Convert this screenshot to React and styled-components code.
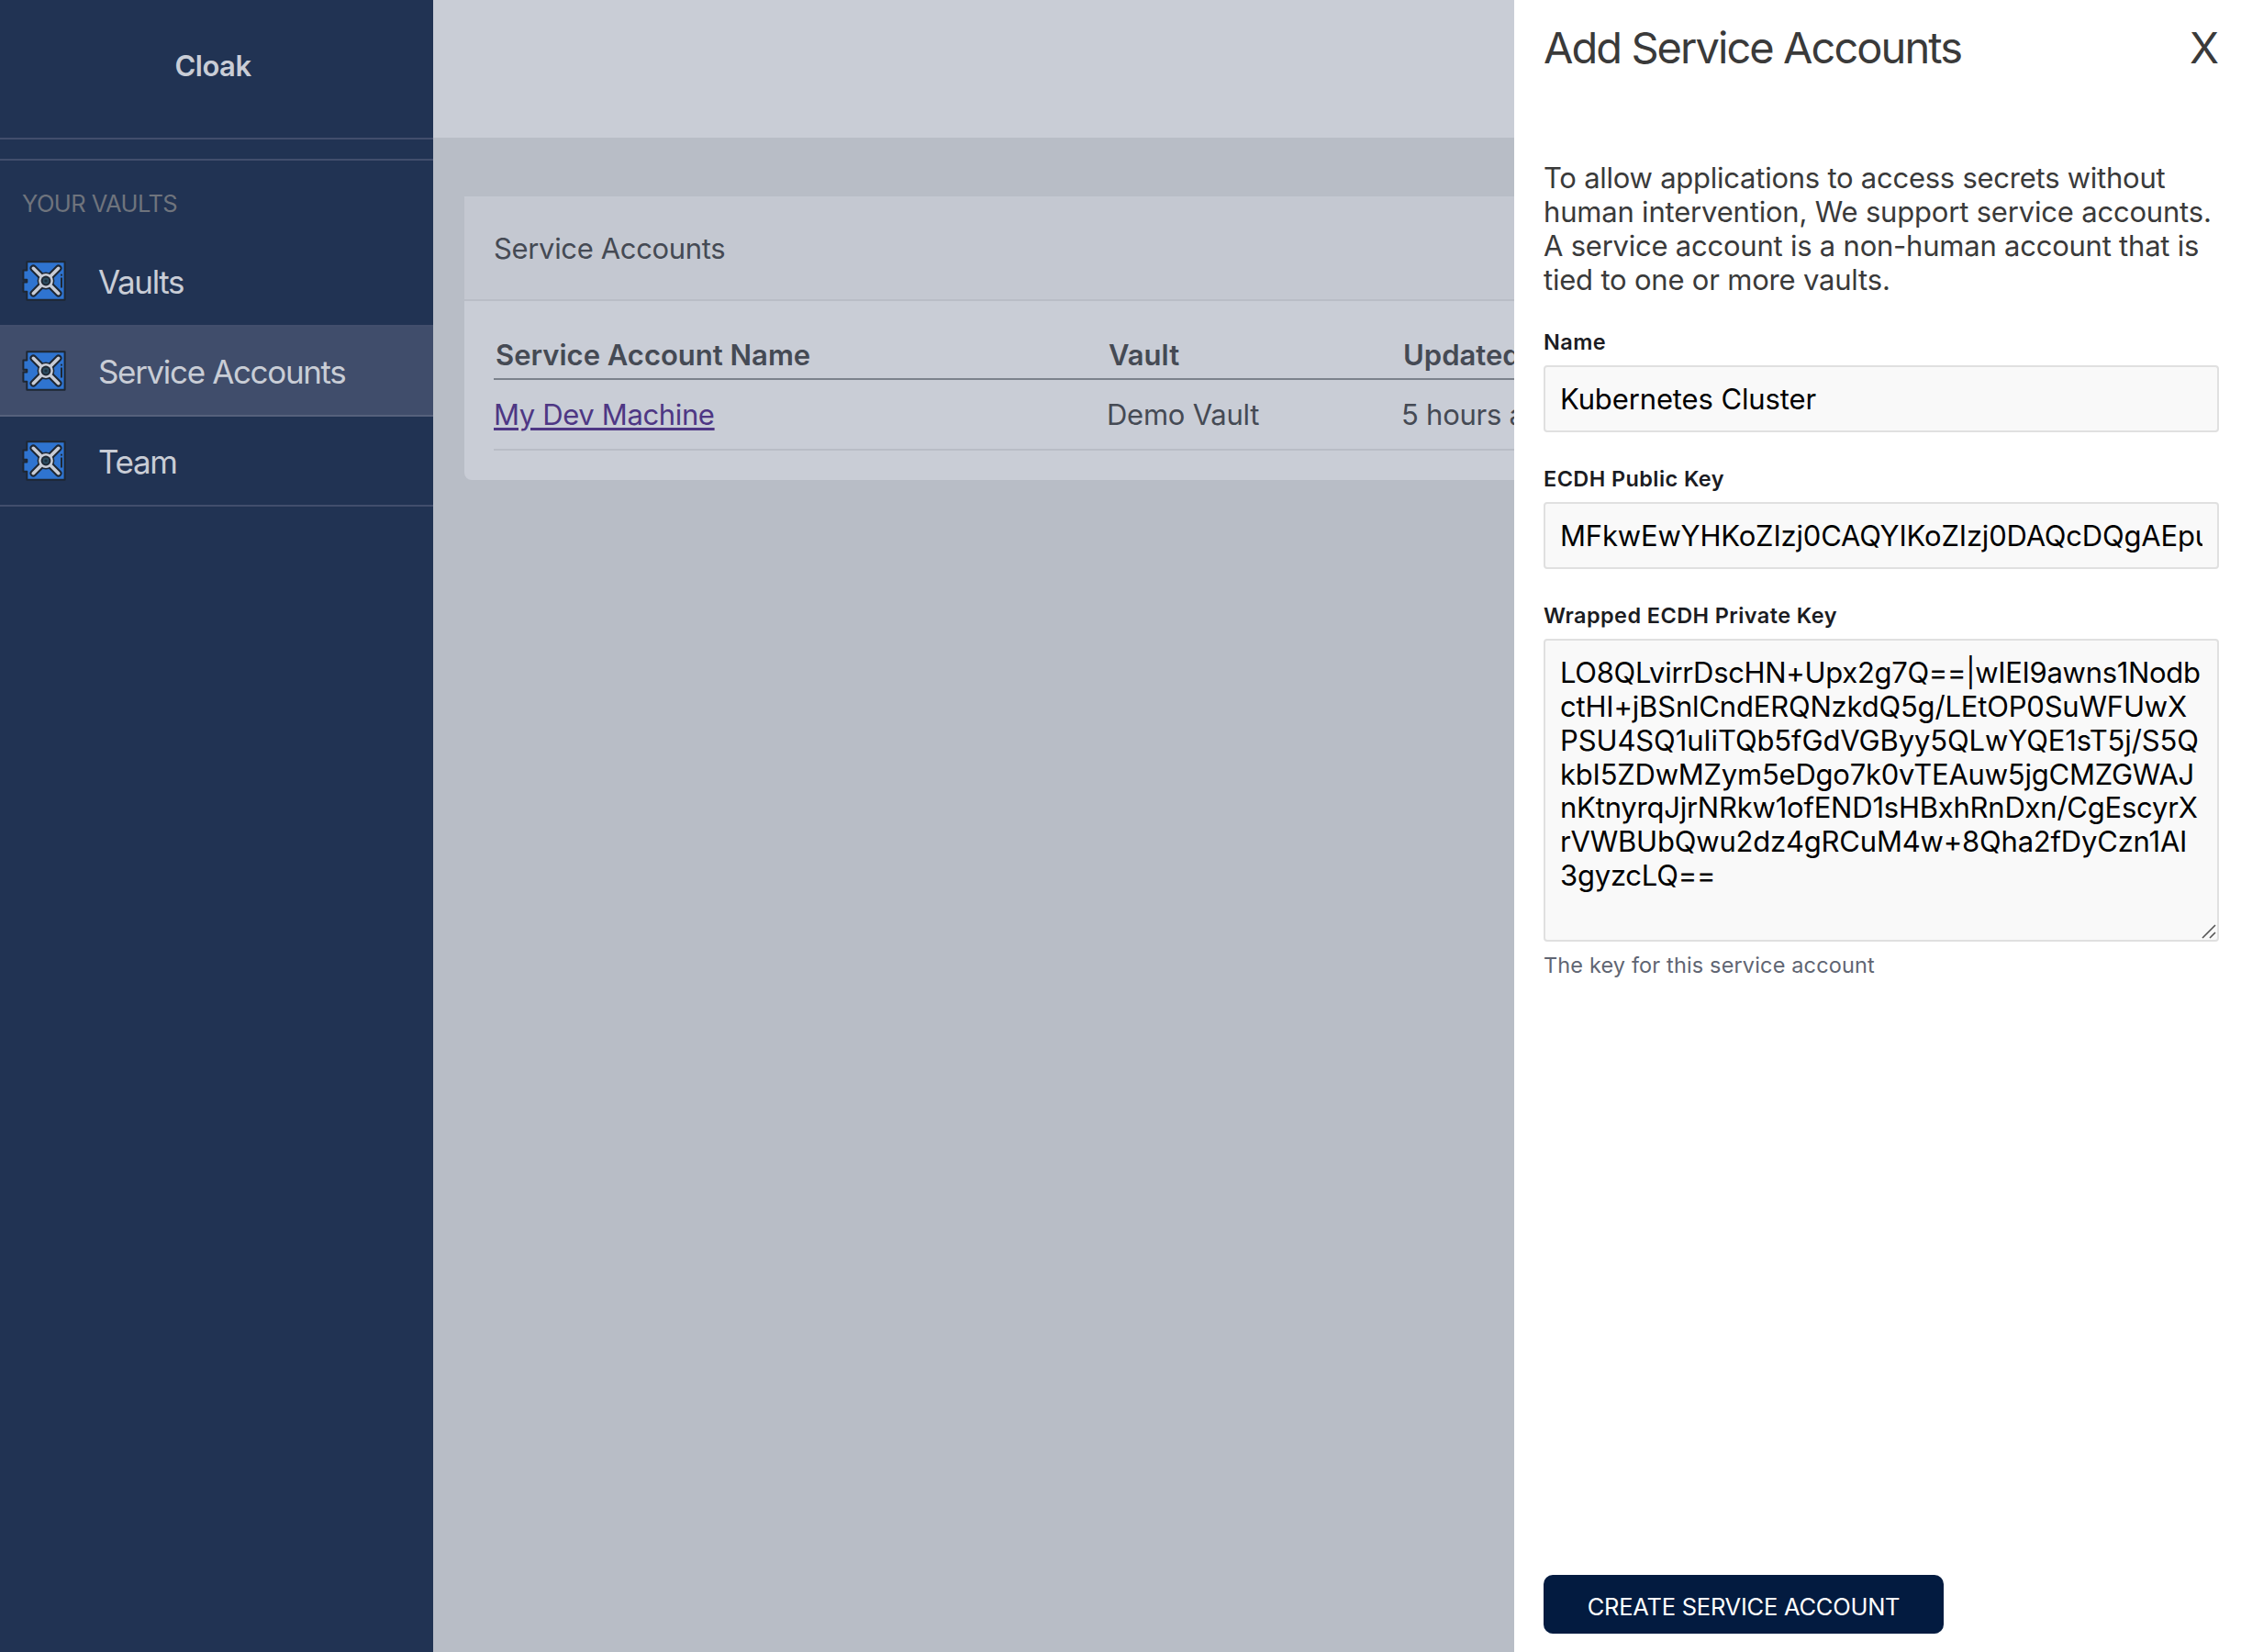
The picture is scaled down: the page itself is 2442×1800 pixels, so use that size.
import React from "react";
import styled, { createGlobalStyle, css } from "styled-components";

const GlobalStyle = createGlobalStyle`
  * { box-sizing: border-box; }
  html, body { margin: 0; padding: 0; }
  body { font-family: Inter, "Liberation Sans", sans-serif; font-size: 31px; }
`;

const Page = styled.div`
  position: relative;
  display: flex;
  width: 100%;
  height: 1800px;
  overflow: hidden;
  background: #b8bdc6;
`;

/* Sidebar */

const Sidebar = styled.aside`
  display: flex;
  flex-direction: column;
  flex: 0 0 472px;
  background: #213353;
  color: #c9cdd6;
`;

const Brand = styled.div`
  height: 152px;
  padding-right: 8px;
  border-bottom: 2px solid #424e6c;
  font-weight: 600;
  line-height: 144px;
  letter-spacing: -0.48px;
  text-align: center;
`;

const Divider = styled.div`
  height: 23px;
  border-bottom: 2px solid #424e6c;
`;

const SectionTitle = styled.h2`
  margin: 0;
  height: 83px;
  padding: 31px 0 0 24px;
  color: #6f747d;
  font-size: 25.5px;
  font-weight: 400;
  line-height: 32px;
  letter-spacing: -0.55px;
`;

const NavItem = styled.a`
  display: flex;
  align-items: center;
  gap: 35px;
  height: 98px;
  padding-left: 24px;
  border-bottom: 2px solid ${(p) => (p.$active ? "#56617c" : "#424e6c")};
  background: ${(p) => (p.$active ? "#404d6b" : "transparent")};
  font-size: 35px;
  font-weight: 400;
  letter-spacing: -1.35px;
  line-height: 44px;
`;

const NavLabel = styled.span`
  padding-top: 2px;
`;

/* Main area */

const Main = styled.main`
  flex: 1;
  min-width: 0;
`;

const TopBar = styled.header`
  height: 150px;
  background: #c9cdd6;
`;

const Card = styled.section`
  margin: 64px 34px 0;
  border-radius: 0 0 8px 8px;
  overflow: hidden;
  background: #c9cdd6;
  color: #454a54;
`;

const CardHeader = styled.div`
  height: 114px;
  padding: 1px 32px 0;
  border-bottom: 2px solid #b9bdc6;
  background: #c4c8d1;
  line-height: 112px;
  letter-spacing: -0.35px;
`;

const CardBody = styled.div`
  padding: 32px;
`;

const TableRow = styled.div`
  display: grid;
  grid-template-columns: 668px 321px 1fr;
  align-items: center;
  ${(p) =>
    p.$head
      ? css`
          height: 54px;
          padding-left: 2px;
          border-bottom: 2px solid #7c828c;
          font-weight: 600;
        `
      : css`
          height: 77px;
          border-bottom: 2px solid #b9bdc6;
          letter-spacing: -0.25px;
        `}
`;

const AccountLink = styled.a`
  color: #4e3784;
  letter-spacing: -0.36px;
  text-decoration: underline;
  text-decoration-thickness: 3px;
  text-underline-offset: 3px;
`;

/* Drawer */

const Drawer = styled.div`
  position: absolute;
  top: 0;
  right: 0;
  bottom: 0;
  display: flex;
  flex-direction: column;
  align-items: stretch;
  width: 792px;
  padding: 24px 24px 20px 32px;
  background: #fff;
  color: #3a3a3a;
`;

const DrawerHeader = styled.div`
  display: flex;
  justify-content: space-between;
  margin-bottom: 95px;
  font-size: 47px;
  line-height: 56px;
`;

const DrawerTitle = styled.h1`
  margin: 0;
  font-size: inherit;
  font-weight: 400;
  letter-spacing: -1.95px;
`;

const CloseButton = styled.button`
  padding: 0;
  border: 0;
  background: none;
  color: inherit;
  font: inherit;
`;

const Intro = styled.p`
  margin: 0 0 35px;
  line-height: 37px;
  white-space: nowrap;
`;

const Line = styled.span`
  display: block;
  white-space: pre;
  letter-spacing: ${(p) => p.$track}px;
`;

const Field = styled.div`
  display: flex;
  flex-direction: column;
  gap: 10px;
  margin-bottom: 36px;
`;

const Label = styled.label`
  color: #1b1c22;
  font-size: 23.5px;
  font-weight: 600;
  line-height: 30px;
  letter-spacing: 0.4px;
`;

const box = css`
  border: 2px solid #e0e0e0;
  border-radius: 4px;
  background: #f9f9f9;
  color: #000;
`;

const TextBox = styled.div`
  ${box}
  height: 73px;
  padding: 0 16px;
  line-height: 69px;
`;

const Clip = styled.div`
  overflow: hidden;
  white-space: nowrap;
  letter-spacing: ${(p) => p.$track}px;
`;

const KeyArea = styled.div`
  ${box}
  position: relative;
  height: 330px;
  padding: 17px 16px 0;
  line-height: 36.84px;
`;

const Grip = styled.svg`
  position: absolute;
  right: 1px;
  bottom: 1px;
`;

const Hint = styled.div`
  padding-top: 1px;
  color: #5f6572;
  font-size: 23.5px;
  line-height: 30px;
  letter-spacing: 0.145px;
`;

const SubmitButton = styled.button`
  width: 436px;
  height: 64px;
  margin: auto 0 0;
  padding: 5px 0 0;
  border: 0;
  border-radius: 10px;
  background: #031b40;
  color: #fff;
  font-family: inherit;
  font-size: 25.5px;
  letter-spacing: -0.25px;
`;

const VaultIcon = () => (
  <svg width="48" height="44" viewBox="0 0 48 44" fill="none">
    <path
      d="M5.3 1.2H46.6V42.7H5.3V33.8H1.4V23.4H5.3V20.8H1.4V10.4H5.3Z"
      fill="#2f74d0"
      stroke="#1e2733"
      strokeWidth="2"
      strokeLinejoin="round"
    />
    <g stroke="#1e2733" strokeLinecap="round">
      <path d="M12.3 8.3L39.7 35.7M39.7 8.3L12.3 35.7" strokeWidth="7.6" />
      <path d="M43 15.6V15.7M43 19.2V28.8" strokeWidth="2" />
    </g>
    <circle cx="26" cy="22" r="9.4" fill="#1e2733" />
    <path d="M12.3 8.3L39.7 35.7M39.7 8.3L12.3 35.7" stroke="#c9cdd6" strokeWidth="3.6" strokeLinecap="round" />
    <circle cx="26" cy="22" r="7.9" fill="#c9cdd6" />
    <circle cx="26" cy="22" r="5.4" fill="#1e2733" />
    <circle cx="26" cy="22" r="3.4" fill="#2c4d60" />
    <circle cx="26" cy="22" r="1.6" fill="#1e2f3d" />
  </svg>
);

const nav = [
  { label: "Vaults" },
  { label: "Service Accounts", active: true },
  { label: "Team" },
];

const intro = [
  ["To allow applications to access secrets without", -0.248],
  ["human intervention, We support service accounts.", -0.19],
  ["A service account is a non-human account that is", -0.227],
  ["tied to one or more vaults.", -0.2],
];

const privateKey = [
  ["LO8QLvirrDscHN+Upx2g7Q==|wIEI9awns1Nodb", -0.313],
  ["ctHI+jBSnlCndERQNzkdQ5g/LEtOP0SuWFUwX", -0.19],
  ["PSU4SQ1uIiTQb5fGdVGByy5QLwYQE1sT5j/S5Q", -0.12],
  ["kbI5ZDwMZym5eDgo7k0vTEAuw5jgCMZGWAJ", -0.23],
  ["nKtnyrqJjrNRkw1ofEND1sHBxhRnDxn/CgEscyrX", -0.22],
  ["rVWBUbQwu2dz4gRCuM4w+8Qha2fDyCzn1AI", -0.2],
  ["3gyzcLQ==", -0.228],
];

export default function App() {
  return (
    <>
      <GlobalStyle />
      <Page>
        <Sidebar>
          <Brand>Cloak</Brand>
          <Divider />
          <SectionTitle>YOUR VAULTS</SectionTitle>
          {nav.map((item) => (
            <NavItem key={item.label} $active={item.active}>
              <VaultIcon />
              <NavLabel>{item.label}</NavLabel>
            </NavItem>
          ))}
        </Sidebar>

        <Main>
          <TopBar />
          <Card>
            <CardHeader>Service Accounts</CardHeader>
            <CardBody>
              <TableRow $head>
                <span>Service Account Name</span>
                <span>Vault</span>
                <span>Updated</span>
              </TableRow>
              <TableRow>
                <span>
                  <AccountLink>My Dev Machine</AccountLink>
                </span>
                <span>Demo Vault</span>
                <span>5 hours ago</span>
              </TableRow>
            </CardBody>
          </Card>
        </Main>

        <Drawer>
          <DrawerHeader>
            <DrawerTitle>Add Service Accounts</DrawerTitle>
            <CloseButton>X</CloseButton>
          </DrawerHeader>

          <Intro>
            {intro.map(([text, track]) => (
              <Line key={text} $track={track}>
                {text}
              </Line>
            ))}
          </Intro>

          <Field>
            <Label>Name</Label>
            <TextBox>
              <Clip $track={-0.12}>Kubernetes Cluster</Clip>
            </TextBox>
          </Field>

          <Field>
            <Label>ECDH Public Key</Label>
            <TextBox>
              <Clip $track={-0.187}>MFkwEwYHKoZIzj0CAQYIKoZIzj0DAQcDQgAEpu</Clip>
            </TextBox>
          </Field>

          <Field>
            <Label>Wrapped ECDH Private Key</Label>
            <KeyArea>
              {privateKey.map(([text, track]) => (
                <Line key={text} $track={track}>
                  {text}
                </Line>
              ))}
              <Grip width="16" height="16" viewBox="0 0 16 16" stroke="#555" strokeWidth="1.6">
                <path d="M1 15L15 1M9 15L15 9" />
              </Grip>
            </KeyArea>
            <Hint>The key for this service account</Hint>
          </Field>

          <SubmitButton>CREATE SERVICE ACCOUNT</SubmitButton>
        </Drawer>
      </Page>
    </>
  );
}
